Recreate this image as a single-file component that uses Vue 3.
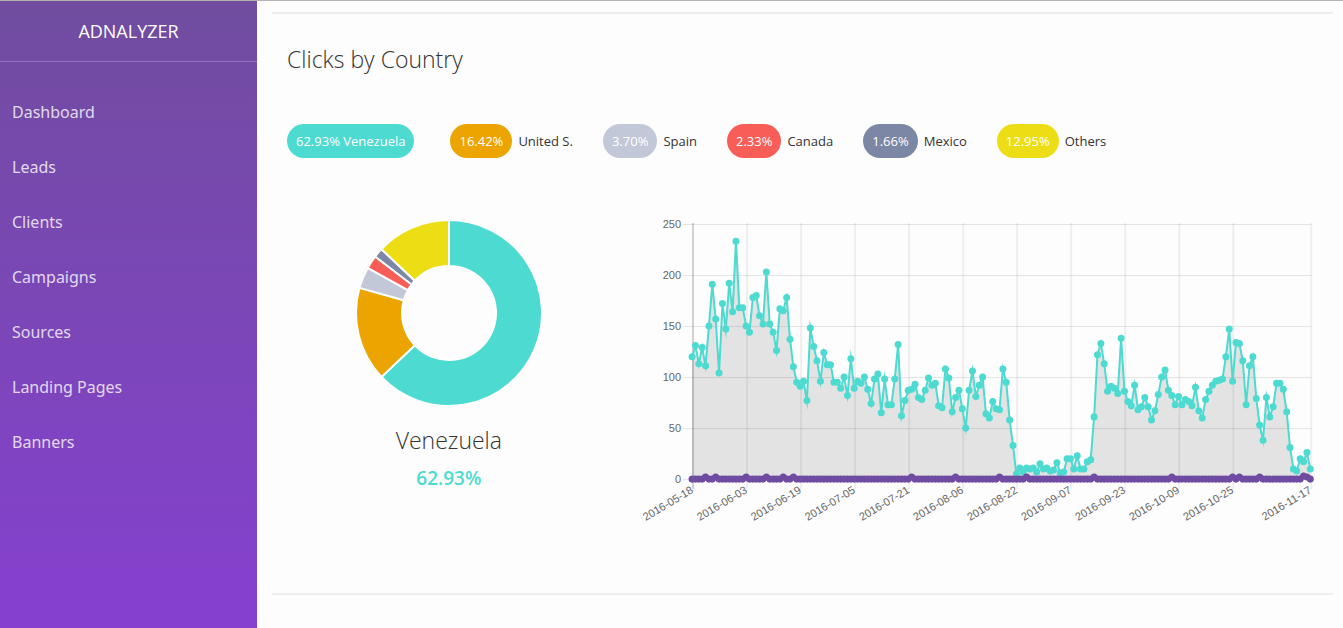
<script setup>
const menu = ['Dashboard', 'Leads', 'Clients', 'Campaigns', 'Sources', 'Landing Pages', 'Banners']

const countries = [
  { key: 'venezuela', name: 'Venezuela', share: 62.93 },
  { key: 'us', name: 'United S.', share: 16.42 },
  { key: 'spain', name: 'Spain', share: 3.7 },
  { key: 'canada', name: 'Canada', share: 2.33 },
  { key: 'mexico', name: 'Mexico', share: 1.66 },
  { key: 'others', name: 'Others', share: 12.95 },
]

const percent = (value) => `${value.toFixed(2)}%`

/* Doughnut */
const total = countries.reduce((sum, c) => sum + c.share, 0)
const outer = 93
const inner = 47
const polar = (r, share) => {
  const angle = (share / total) * Math.PI * 2
  return `${(93 + r * Math.sin(angle)).toFixed(2)} ${(93 - r * Math.cos(angle)).toFixed(2)}`
}
let passed = 0
const slices = countries.map((c) => {
  const from = passed
  passed += c.share
  const large = c.share / total > 0.5 ? 1 : 0
  return {
    key: c.key,
    d: `M${polar(outer, from)} A${outer} ${outer} 0 ${large} 1 ${polar(outer, passed)} L${polar(inner, passed)} A${inner} ${inner} 0 ${large} 0 ${polar(inner, from)} Z`,
  }
})

/* Line chart */
const clicks = [
  120, 131, 113, 129, 111, 150, 191, 157, 104, 172, 147, 192, 164, 233, 168, 168, 150, 144, 178, 180,
  160, 152, 203, 152, 144, 126, 167, 165, 178, 137, 110, 95, 91, 96, 77, 148, 130, 116, 96, 124,
  112, 112, 95, 95, 89, 100, 82, 118, 89, 96, 94, 100, 88, 74, 98, 103, 65, 98, 73, 73,
  98, 132, 62, 77, 87, 88, 93, 80, 78, 87, 99, 92, 94, 72, 70, 108, 99, 66, 80, 87,
  69, 50, 87, 106, 81, 92, 100, 64, 60, 76, 69, 68, 108, 95, 58, 33, 5, 11, 7, 11,
  10, 11, 7, 15, 10, 11, 8, 9, 16, 6, 7, 20, 20, 10, 23, 10, 10, 17, 19, 61,
  122, 133, 113, 86, 91, 89, 84, 138, 86, 76, 72, 92, 68, 71, 80, 71, 58, 67, 83, 100,
  107, 87, 82, 73, 81, 73, 78, 76, 72, 90, 67, 60, 78, 86, 92, 96, 97, 98, 120, 147,
  96, 134, 133, 116, 73, 111, 120, 79, 53, 38, 80, 61, 71, 94, 94, 88, 66, 31, 10, 8,
  20, 17, 26, 10,
]
const leadDays = { 4: 2, 7: 2, 16: 2, 22: 2, 27: 2, 30: 2, 65: 2, 78: 2, 91: 2, 99: 2, 119: 2, 142: 2, 160: 2, 162: 2, 168: 2, 181: 3, 182: 2 }
const leads = clicks.map((_, day) => leadDays[day] || 0)

const plot = { left: 51, right: 669, top: 14, bottom: 269 }
const step = (plot.right - plot.left) / (clicks.length - 1)
const xOf = (day) => plot.left + day * step
const yOf = (value) => plot.bottom - (value / 250) * (plot.bottom - plot.top)
const toPoints = (values) => values.map((v, day) => ({ x: Number(xOf(day).toFixed(2)), y: Number(yOf(v).toFixed(2)) }))
const toLine = (points) => points.map((p) => `${p.x},${p.y}`).join(' ')

const clickPoints = toPoints(clicks)
const leadPoints = toPoints(leads)
const area = `${plot.left},${plot.bottom} ${toLine(clickPoints)} ${plot.right},${plot.bottom}`

const yTicks = [0, 50, 100, 150, 200, 250].map((value) => ({ value, y: yOf(value) }))
const dates = ['05-18', '06-03', '06-19', '07-05', '07-21', '08-06', '08-22', '09-07', '09-23', '10-09', '10-25', '11-17']
const xTicks = dates.map((date, i) => ({
  label: `2016-${date}`,
  x: i === dates.length - 1 ? plot.right : Math.round(xOf(i * 16)),
}))
</script>

<template>
  <div class="page">
    <aside class="sidebar">
      <a class="brand" href="#">ADNALYZER</a>
      <nav class="menu">
        <a v-for="item in menu" :key="item" href="#">{{ item }}</a>
      </nav>
    </aside>

    <main class="main">
      <section class="panel">
        <h1>Clicks by Country</h1>

        <div class="legend">
          <div v-for="(c, i) in countries" :key="c.key" class="entry">
            <button type="button" class="pill" :class="c.key">{{ percent(c.share) }}{{ i === 0 ? ' ' + c.name : '' }}</button>
            <span class="name">{{ i === 0 ? '' : c.name }}</span>
          </div>
        </div>

        <div class="charts">
          <div class="share">
            <svg class="doughnut" viewBox="0 0 186 186" role="img" aria-label="Clicks by country">
              <path v-for="s in slices" :key="s.key" :d="s.d" class="slice" :class="s.key" />
            </svg>
            <h2>{{ countries[0].name }}</h2>
            <strong>{{ percent(countries[0].share) }}</strong>
          </div>

          <div class="history">
            <svg viewBox="0 0 677 338" role="img" aria-label="Clicks per day">
              <g class="grid">
                <g v-for="t in yTicks" :key="t.value">
                  <rect x="42" :y="t.y" width="628" height="1" />
                  <text x="40" :y="t.y + 4">{{ t.value }}</text>
                </g>
                <g v-for="(t, i) in xTicks" :key="t.label">
                  <rect class="column" :class="{ axis: i === 0 }" :x="t.x" y="13" width="2" height="266" />
                  <text :transform="`translate(${t.x + 2} 282) rotate(-31)`">{{ t.label }}</text>
                </g>
              </g>
              <polygon class="area" :points="area" />
              <g class="clicks">
                <polyline :points="toLine(clickPoints)" />
                <circle v-for="(p, i) in clickPoints" :key="i" :cx="p.x" :cy="p.y" r="3.5" />
              </g>
              <g class="leads">
                <polyline :points="toLine(leadPoints)" />
                <circle v-for="(p, i) in leadPoints" :key="i" :cx="p.x" :cy="p.y" r="3.5" />
              </g>
            </svg>
          </div>
        </div>
      </section>
    </main>
  </div>
</template>

<style>
body {
  background: #fdfdfd;
}
</style>

<style scoped>
.page {
  display: flex;
  min-height: 100vh;
  box-sizing: border-box;
  border-top: 1px solid #b3b3b3;
  background: #fdfdfd;
  color: #333;
  font-family: "Open Sans", sans-serif;
}

.sidebar {
  flex: none;
  width: 257px;
  background: linear-gradient(#704d9f, #8640d0);
}

.brand {
  display: block;
  border-bottom: 1px solid #9270bd;
  color: #fff;
  font-size: 18px;
  line-height: 60px;
  text-align: center;
  text-decoration: none;
}

.menu {
  display: flex;
  flex-direction: column;
  padding-top: 23px;
}

.menu a {
  padding: 0 12px;
  color: rgba(255, 255, 255, 0.8);
  font-family: "Noto Sans", "Open Sans", sans-serif;
  font-size: 16px;
  line-height: 55px;
  text-decoration: none;
}

.main {
  flex: 1;
  min-width: 0;
  padding: 11px 10px 33px 15px;
}

.panel {
  box-sizing: border-box;
  height: 100%;
  padding: 25px 15px 0;
  border: solid #eee;
  border-width: 2px 0;
}

h1,
h2 {
  margin: 0;
  font-size: 23px;
  font-weight: 300;
  line-height: 40px;
}

.legend {
  display: flex;
  flex-wrap: wrap;
  gap: 12px 30px;
  margin-top: 45px;
}

.entry {
  display: flex;
  align-items: center;
  gap: 6px;
  font-size: 13px;
}

.pill {
  height: 34px;
  padding: 0 9px;
  border: 0;
  border-radius: 17px;
  color: #fff;
  font: inherit;
}

.venezuela { background: #4ddad1; fill: #4ddad1; }
.us { background: #eca400; fill: #eca400; }
.spain { background: #c2c8d7; fill: #c2c8d7; }
.canada { background: #f95d57; fill: #f95d57; }
.mexico { background: #7c87a5; fill: #7c87a5; }
.others { background: #ecdd15; fill: #ecdd15; }

.charts {
  display: grid;
  grid-template-columns: 1fr 2fr;
  margin: 52px -15px 0;
}

.share {
  display: flex;
  flex-direction: column;
  align-items: center;
  padding-top: 10px;
}

.doughnut {
  width: 186px;
  margin-bottom: 14px;
}

.slice {
  background: none;
  stroke: #fff;
  stroke-width: 2;
}

.share strong {
  color: #4ddad1;
  font-size: 19px;
  font-weight: 600;
  line-height: 36px;
}

.history {
  padding: 0 15px;
}

.history svg {
  display: block;
  width: 100%;
}

.grid rect {
  fill: rgba(0, 0, 0, 0.1);
}

.grid .column {
  fill: rgba(0, 0, 0, 0.06);
}

.grid .axis {
  fill: rgba(0, 0, 0, 0.18);
}

.grid text {
  fill: #666;
  font-family: "Liberation Sans", Arial, sans-serif;
  font-size: 11px;
  text-anchor: end;
}

.area {
  fill: rgba(0, 0, 0, 0.1);
}

polyline {
  fill: none;
  stroke-width: 2;
  stroke-miterlimit: 10;
}

.clicks {
  fill: #4ddad1;
  stroke: #4ddad1;
}

.leads {
  fill: #704ba2;
  stroke: #704ba2;
}

.leads polyline {
  stroke-width: 3;
}

circle {
  stroke: none;
}
</style>
